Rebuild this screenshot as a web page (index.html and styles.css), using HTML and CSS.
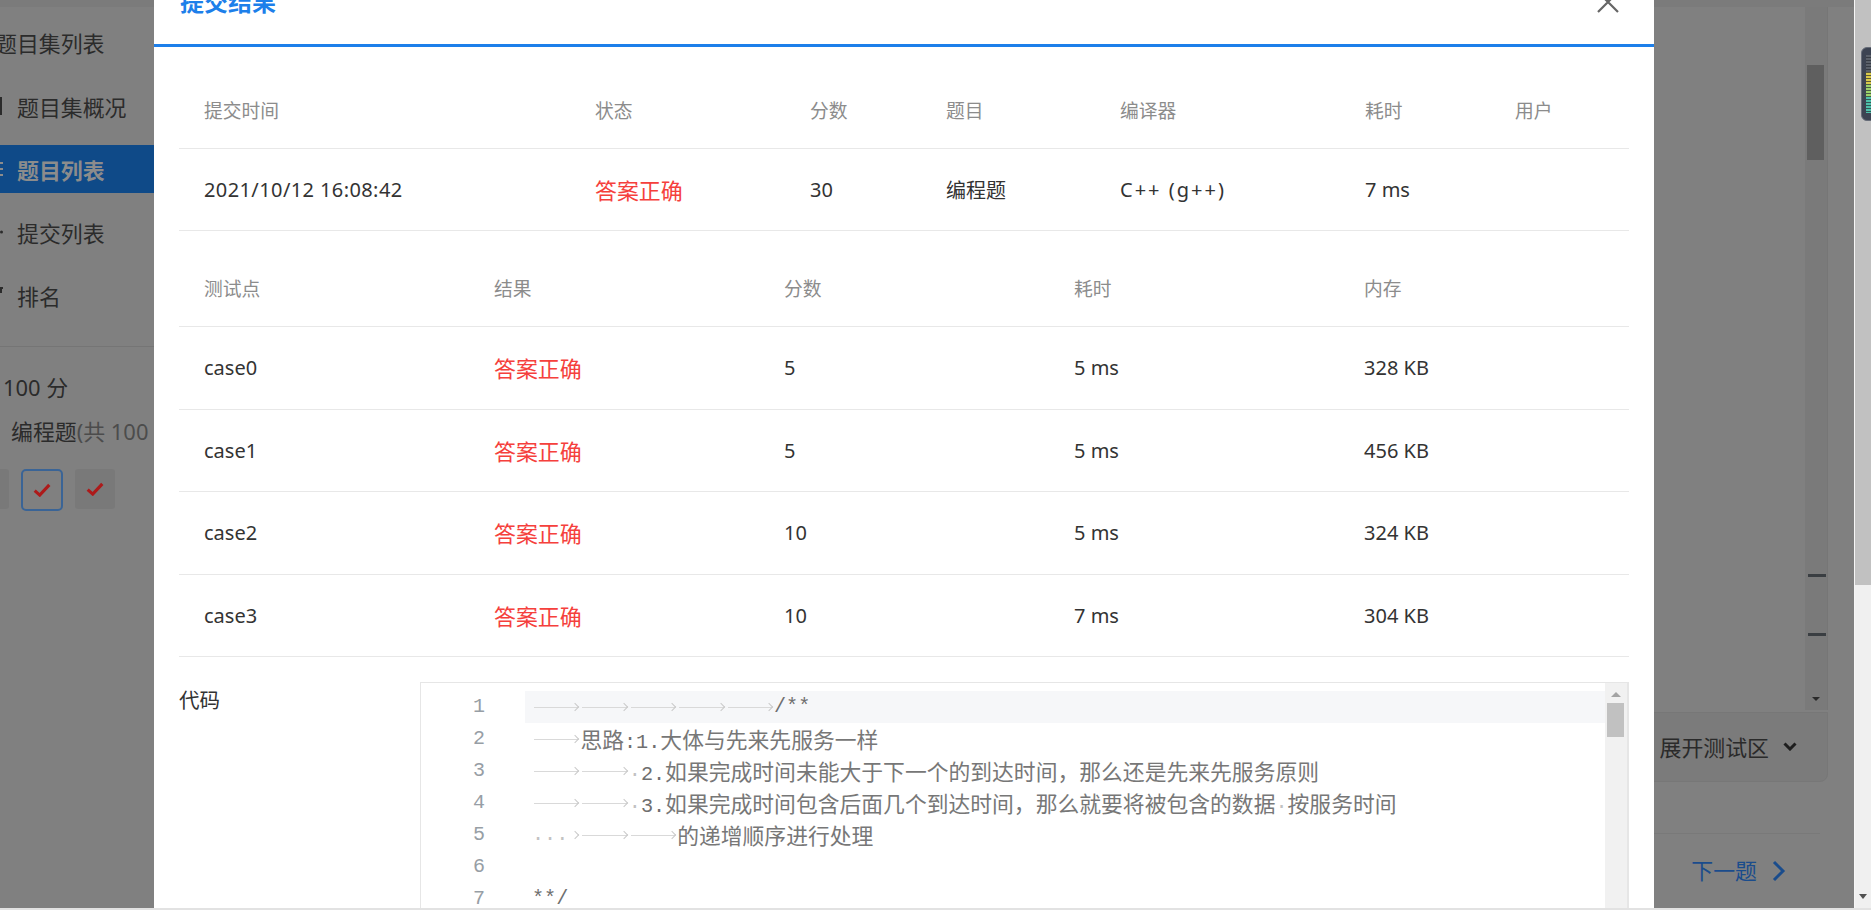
FILE: index.html
```html
<!DOCTYPE html>
<html lang="zh-CN">
<head>
<meta charset="utf-8">
<title>提交结果</title>
<link rel="stylesheet" href="styles.css">
</head>
<body>
<div class="screen">
  <div class="viewport">
    <div class="page">
      <aside class="sidebar">
        <div class="side-title">题目集列表</div>
        <nav class="nav">
          <div class="nav-item">
            <svg class="nav-icon" viewBox="0 0 18 18"><rect x="2" y="1" width="14" height="16" fill="none" stroke="currentColor" stroke-width="2"/></svg>
            <span>题目集概况</span>
          </div>
          <div class="nav-item active">
            <svg class="nav-icon" viewBox="0 0 18 18"><path d="M0 3h3M0 9h3M0 15h3M6 3h12M6 9h12M6 15h12" stroke="currentColor" stroke-width="2"/></svg>
            <span>题目列表</span>
          </div>
          <div class="nav-item">
            <svg class="nav-icon" viewBox="0 0 18 18"><path d="M3 3h10M3 8h10M3 13h6" stroke="currentColor" stroke-width="2"/><circle cx="16.5" cy="9" r="1.5" fill="currentColor"/></svg>
            <span>提交列表</span>
          </div>
          <div class="nav-item">
            <svg class="nav-icon" viewBox="0 0 18 18"><path d="M4 2h14M16 2v5M8 6v10M12 9v7" stroke="currentColor" stroke-width="2"/></svg>
            <span>排名</span>
          </div>
        </nav>
        <div class="side-divider"></div>
        <div class="score">100 分</div>
        <div class="qtype">编程题<span class="qtype-note">(共 100 分)</span></div>
        <div class="boxes">
          <div class="box"><svg class="check" viewBox="0 0 16 12"><path d="M1.5 6.5l4.5 4 8.5-9" fill="none" stroke="currentColor" stroke-width="2.8"/></svg></div>
          <div class="box sel"><svg class="check" viewBox="0 0 16 12"><path d="M1.5 6.5l4.5 4 8.5-9" fill="none" stroke="currentColor" stroke-width="2.8"/></svg></div>
          <div class="box"><svg class="check" viewBox="0 0 16 12"><path d="M1.5 6.5l4.5 4 8.5-9" fill="none" stroke="currentColor" stroke-width="2.8"/></svg></div>
        </div>
      </aside>
      <main class="content">
        <div class="editor">
          <div class="editor-main"></div>
          <div class="editor-scroll">
            <div class="es-thumb"></div>
            <div class="es-mark m1"></div>
            <div class="es-mark m2"></div>
            <div class="es-arrow"></div>
          </div>
        </div>
        <div class="test-bar">
          <span>展开测试区</span>
          <svg class="chev-down" viewBox="0 0 14 9"><path d="M1.5 1.5l5.5 5.5 5.5-5.5" fill="none" stroke="currentColor" stroke-width="3"/></svg>
        </div>
        <div class="footer">
          <a class="next">下一题
            <svg class="chev-right" viewBox="0 0 14 22"><path d="M2 2l9 9-9 9" fill="none" stroke="currentColor" stroke-width="3"/></svg>
          </a>
        </div>
      </main>
    </div>

    <section class="modal">
      <header class="modal-head">
        <h2 class="modal-title">提交结果</h2>
        <svg class="close" viewBox="0 0 22 22"><path d="M1 1l20 20M21 1L1 21" stroke="currentColor" stroke-width="2.2"/></svg>
      </header>
      <div class="modal-body">
        <div class="grid g1">
          <div class="row head">
            <div>提交时间</div><div>状态</div><div>分数</div><div>题目</div><div>编译器</div><div>耗时</div><div>用户</div>
          </div>
          <div class="row">
            <div class="num">2021/10/12 16:08:42</div><div class="ok">答案正确</div><div>30</div><div>编程题</div><div class="wide">C++ (g++)</div><div>7 ms</div><div></div>
          </div>
        </div>

        <div class="grid g2">
          <div class="row head">
            <div>测试点</div><div>结果</div><div>分数</div><div>耗时</div><div>内存</div>
          </div>
          <div class="row tall">
            <div>case0</div><div class="ok">答案正确</div><div>5</div><div>5 ms</div><div>328 KB</div>
          </div>
          <div class="row tall">
            <div>case1</div><div class="ok">答案正确</div><div>5</div><div>5 ms</div><div>456 KB</div>
          </div>
          <div class="row tall">
            <div>case2</div><div class="ok">答案正确</div><div>10</div><div>5 ms</div><div>324 KB</div>
          </div>
          <div class="row tall">
            <div>case3</div><div class="ok">答案正确</div><div>10</div><div>7 ms</div><div>304 KB</div>
          </div>
        </div>

        <div class="code-row">
          <div class="code-label">代码</div>
          <div class="code-box">
            <div class="gutter">
              <div>1</div><div>2</div><div>3</div><div>4</div><div>5</div><div>6</div><div>7</div>
            </div>
            <div class="lines">
              <div class="ln cur"><span class="t"></span><span class="t"></span><span class="t"></span><span class="t"></span><span class="t"></span>/**</div>
              <div class="ln"><span class="t"></span><span class="zh">思路</span>:1.<span class="zh">大体与先来先服务一样</span></div>
              <div class="ln"><span class="t"></span><span class="t"></span><span class="d">·</span>2.<span class="zh">如果完成时间未能大于下一个的到达时间，那么还是先来先服务原则</span></div>
              <div class="ln"><span class="t"></span><span class="t"></span><span class="d">·</span>3.<span class="zh">如果完成时间包含后面几个到达时间，那么就要将被包含的数据</span><span class="d">·</span><span class="zh">按服务时间</span></div>
              <div class="ln"><span class="d">·</span><span class="d">·</span><span class="d">·</span><span class="t t1"></span><span class="t"></span><span class="t"></span><span class="zh">的递增顺序进行处理</span></div>
              <div class="ln"></div>
              <div class="ln">**/</div>
            </div>
            <div class="cscroll">
              <div class="cs-up"></div>
              <div class="cs-thumb"></div>
            </div>
          </div>
        </div>
      </div>
    </section>
  </div>
  <div class="vscroll">
    <div class="vs-thumb"></div>
    <div class="vs-down"></div>
  </div>
  <div class="widget"><div class="widget-bars"></div></div>
</div>
<div class="hscroll"></div>
</body>
</html>
```

FILE: styles.css
```css
* { box-sizing: border-box; }

html, body {
  margin: 0;
  padding: 0;
  overflow: hidden;
}

body {
  font-family: "Noto Sans", "Noto Sans CJK SC", sans-serif;
  background: #808080;
  color: #333;
}

.screen {
  display: flex;
  height: 908px;
  position: relative;
}

.viewport {
  flex: 1;
  position: relative;
  overflow: hidden;
  background: #808080;
}

.page {
  display: flex;
  height: 100%;
  border-top: 7px solid #7b7b7b;
}

/* ---------- sidebar (dimmed by mask) ---------- */
.sidebar {
  width: 179px;
  flex: none;
  margin-left: -25px;
  padding-top: 11px;
  font-size: 21.9px;
  color: #2b2b2b;
  white-space: nowrap;
}

.side-title {
  height: 48px;
  display: flex;
  align-items: center;
  padding-left: 20px;
}

.nav {
  display: flex;
  flex-direction: column;
  gap: 15px;
  margin-top: 16px;
}

.nav-item {
  height: 48px;
  display: flex;
  align-items: center;
  gap: 14px;
  padding-left: 10px;
}

.nav-icon {
  width: 18px;
  height: 18px;
  flex: none;
}

.nav-item.active {
  background: #0f4a88;
  color: #8c8c8c;
  font-weight: 700;
}

.side-divider {
  margin-top: 27px;
  border-top: 1px solid #757575;
}

.score {
  margin-top: 26px;
  line-height: 30px;
  padding-left: 28px;
}

.qtype {
  margin-top: 14px;
  line-height: 30px;
  padding-left: 36px;
}

.qtype-note { color: #4c4c4c; }

.boxes {
  display: flex;
  gap: 12px;
  margin-top: 22px;
  margin-left: -6px;
}

.box {
  width: 40px;
  height: 40px;
  flex: none;
  background: #797979;
  border-radius: 3px;
  display: flex;
  align-items: center;
  justify-content: center;
  color: #ad1a1a;
}

.box.sel {
  width: 42px;
  height: 42px;
  background: #808080;
  border: 2px solid #3a6496;
  border-radius: 5px;
}

.check { width: 18px; height: 14px; }

/* ---------- right content (dimmed) ---------- */
.content {
  flex: 1;
  display: flex;
  flex-direction: column;
  padding-right: 26px;
}

.editor {
  height: 703px;
  display: flex;
}

.editor-main { flex: 1; }

.editor-scroll {
  width: 23px;
  position: relative;
  background: #7a7a7a;
  border-right: 1px solid #767676;
}

.es-thumb {
  position: absolute;
  left: 2px;
  right: 3px;
  top: 58px;
  height: 95px;
  background: #5f5f5f;
}

.es-mark {
  position: absolute;
  left: 3px;
  right: 1px;
  height: 3px;
  background: #3a3e42;
}
.es-mark.m1 { top: 567px; }
.es-mark.m2 { top: 626px; }

.es-arrow {
  position: absolute;
  left: 7px;
  top: 690px;
  width: 0;
  height: 0;
  border-left: 4px solid transparent;
  border-right: 4px solid transparent;
  border-top: 4px solid #2a2a2a;
}

.test-bar {
  margin-top: 2px;
  height: 70px;
  background: #7b7b7b;
  border: 1px solid #777;
  border-radius: 0 0 8px 0;
  display: flex;
  align-items: center;
  justify-content: flex-end;
  gap: 14px;
  padding-right: 30px;
  padding-bottom: 2px;
  font-size: 21.9px;
  color: #2a2a2a;
}

.chev-down { width: 14px; height: 9px; color: #1e1e1e; }

.footer {
  margin-top: 51px;
  margin-right: 8px;
  border-top: 1px solid #797979;
  display: flex;
  justify-content: flex-end;
  padding-top: 22px;
  padding-right: 34px;
}

.next {
  display: flex;
  align-items: center;
  gap: 15px;
  font-size: 21.9px;
  line-height: 30px;
  color: #1a4c8c;
}

.chev-right { width: 14px; height: 22px; }

/* ---------- page scrollbars ---------- */
.vscroll {
  width: 17px;
  flex: none;
  position: relative;
  background: #f0f0f0;
  border-left: 1px solid #f6f6f6;
}

.vs-thumb {
  height: 585px;
  background: #c1c1c1;
}

.vs-down {
  position: absolute;
  left: 4px;
  top: 894px;
  border-left: 4px solid transparent;
  border-right: 4px solid transparent;
  border-top: 5px solid #505050;
}

.hscroll {
  height: 2px;
  background: #e2e2e2;
}

.widget {
  position: absolute;
  right: -6px;
  top: 47px;
  width: 16px;
  height: 74px;
  background: #3c4352;
  border: 1px solid #666c78;
  border-radius: 6px;
  padding: 7px 0 7px 4px;
}

.widget-bars {
  height: 100%;
  background:
    repeating-linear-gradient(to bottom, transparent 0 2px, rgba(40,44,52,0.7) 2px 3px),
    linear-gradient(to bottom, #5a606a 0 30%, #d9c94a 30% 50%, #9cd16a 50% 72%, #4dc0aa 72% 100%);
}

/* ---------- modal ---------- */
.modal {
  position: absolute;
  left: 154px;
  top: -40px;
  width: 1500px;
  height: 1100px;
  background: #fff;
}

.modal-head {
  height: 87px;
  padding: 0 35px 0 26px;
  display: flex;
  align-items: center;
  justify-content: space-between;
  border-bottom: 3px solid #1d7fea;
}

.modal-title {
  margin: 0;
  font-size: 24px;
  font-weight: 700;
  color: #1d7fea;
  line-height: 30px;
}

.close {
  width: 22px;
  height: 22px;
  color: #666;
}

.modal-body {
  padding: 20px 25px 0;
}

.grid .row {
  display: grid;
  height: 82px;
  border-bottom: 1px solid #e8e8e8;
  align-items: center;
  font-size: 20px;
  color: #333;
}

.grid .row > div {
  padding-left: 25px;
  white-space: nowrap;
}

.grid .row > .num { letter-spacing: 0.4px; }
.grid .row > .wide { letter-spacing: 2px; }

.grid .row.head {
  font-size: 18.75px;
  color: #8c8c8c;
  padding-top: 3px;
}

.grid .row.tall { height: 82.5px; }

.g1 .row {
  grid-template-columns: 391px 215px 136px 174px 245px 150px 139px;
}

.g2 {
  margin-top: 14px;
}

.g2 .row {
  grid-template-columns: repeat(5, 1fr);
}

.ok {
  color: #f5403c;
  font-size: 21.9px;
}

/* ---------- code ---------- */
.code-row {
  display: flex;
  margin-top: 25px;
}

.code-label {
  width: 241px;
  flex: none;
  font-size: 20.5px;
  line-height: 32px;
  padding-top: 2px;
  color: #333;
}

.code-box {
  flex: 1;
  height: 260px;
  display: flex;
  border: 1px solid #e6e6e6;
  border-bottom: none;
}

.gutter {
  width: 104px;
  flex: none;
  padding-top: 8px;
  padding-right: 40px;
  text-align: right;
  font-family: "Liberation Mono", monospace;
  font-size: 20px;
  line-height: 32px;
  color: #979ea5;
}

.lines {
  flex: 1;
  padding-top: 8px;
  font-family: "Liberation Mono", "Noto Sans CJK SC", monospace;
  font-size: 20.2px;
  color: #6f6f6f;
}

.ln {
  height: 32px;
  line-height: 32px;
  padding-left: 7px;
  white-space: pre;
  overflow: hidden;
}

.ln.cur { background: #f6f7f9; }

.zh {
  font-family: "Noto Sans CJK SC", sans-serif;
  font-size: 21.8px;
  line-height: 32px;
  color: #777;
}

.t {
  display: inline-block;
  width: 48.4px;
  height: 32px;
  vertical-align: top;
  position: relative;
  background: linear-gradient(#d9d9d9, #d9d9d9) no-repeat 2px 16px / calc(100% - 4px) 1px;
}

.t::after {
  content: "";
  position: absolute;
  right: 2px;
  top: 13px;
  width: 5px;
  height: 5px;
  border-top: 1px solid #c9c9c9;
  border-right: 1px solid #c9c9c9;
  transform: rotate(45deg);
}

.t.t1 {
  width: 12.1px;
  background: none;
}

.d {
  display: inline-block;
  width: 12.1px;
  text-align: center;
  color: #c2c2c2;
}

.cscroll {
  width: 23px;
  flex: none;
  background: #f1f1f1;
  border-right: 1px solid #e6e6e6;
  padding-top: 9px;
}

.cs-up {
  width: 0;
  height: 0;
  margin-left: 6px;
  border-left: 5px solid transparent;
  border-right: 5px solid transparent;
  border-bottom: 5px solid #a3a3a3;
}

.cs-thumb {
  margin: 6px 3px 0 2px;
  height: 34px;
  background: #c1c1c1;
}
```
